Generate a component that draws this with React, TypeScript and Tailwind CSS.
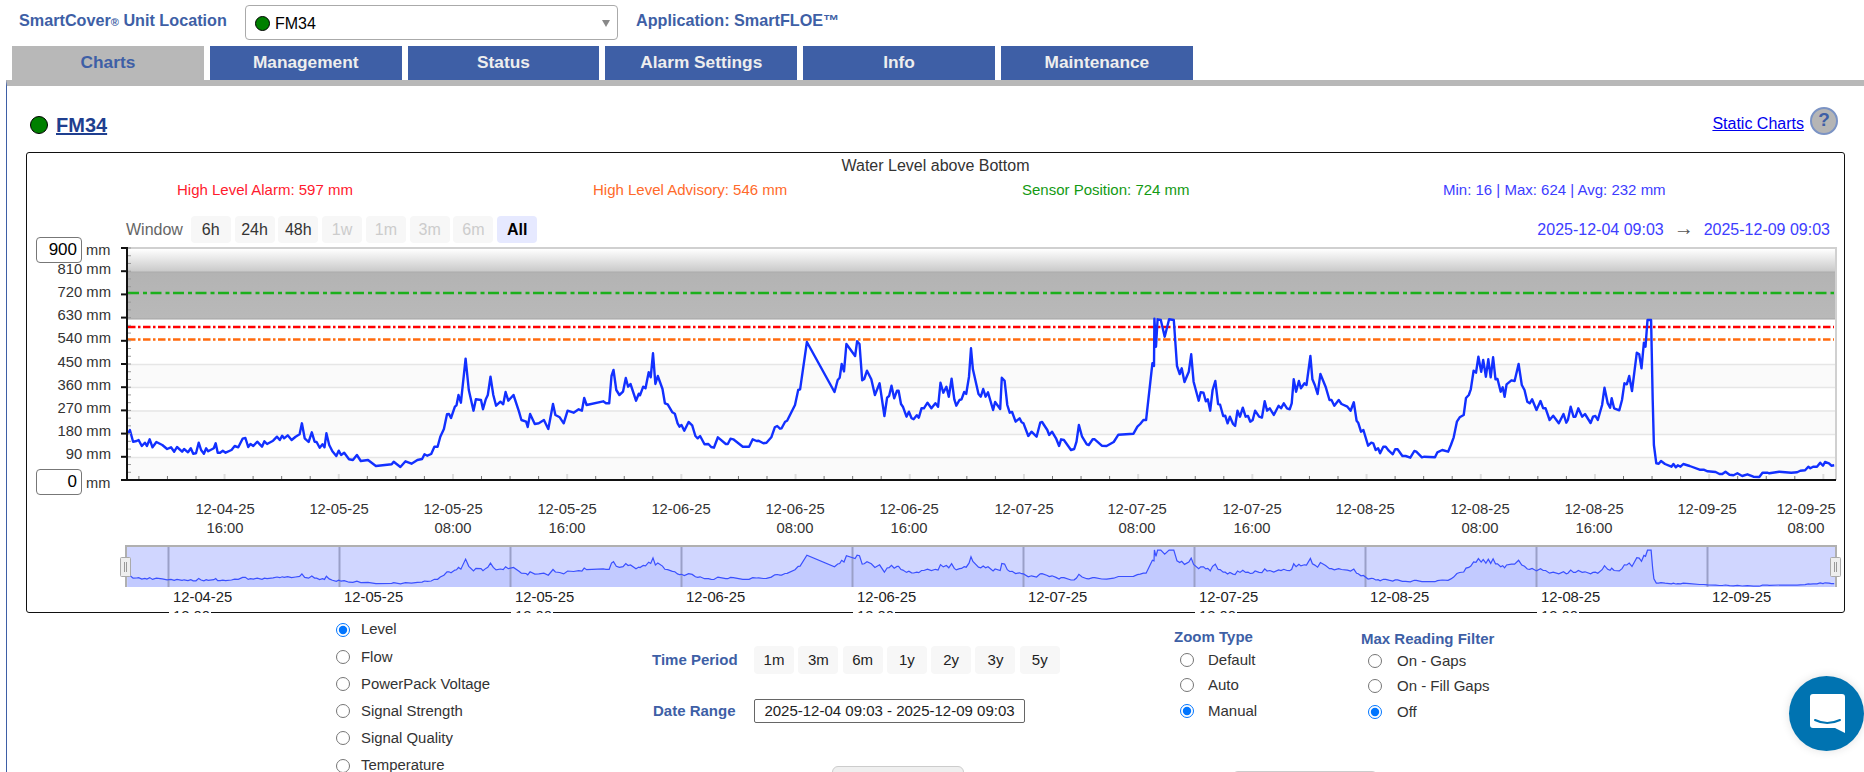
const rawA = "272,582 278,570 286,605 295,603 300,600 308,618 316,608 321,618 328,598 335,622 345,606 360,615 372,627 382,622 390,635 397,621 410,635 415,627 425,637 432,625 438,641 445,640 452,608 458,630 465,641 471,625 476,634 490,625 495,610 500,638 506,638 513,632 520,638 535,630 543,618 552,622 563,596 570,594 577,621 583,612 590,618 600,605 612,620 618,604 625,612 640,602 650,590 657,600 663,587 668,595 677,586 687,600 697,590 707,583 713,550 720,595 730,606 738,577 745,605 750,606 758,623 765,613 770,622 775,580 782,615 790,634 800,648 806,632 812,645 820,638 832,658 842,660 852,645 862,663 880,660 900,678 940,673 945,665 962,681 975,664 990,671 1005,660 1017,657 1023,643 1030,647 1040,642 1048,620 1056,620 1063,590 1072,567 1080,523 1085,522 1090,534 1100,500 1104,496 1109,465 1115,488 1127,356 1135,450 1147,512 1153,478 1166,480 1171,508 1178,478 1183,465 1190,410 1197,465 1204,497 1215,485 1222,493 1228,456 1235,482 1248,465 1262,515 1268,540 1280,545 1284,561 1290,522 1302,552 1312,550 1325,540 1336,567 1348,492 1354,525 1365,532 1375,550 1385,512 1400,518 1413,508 1421,512 1427,474 1433,495 1475,484 1482,490 1490,490 1496,408 1501,390 1508,450 1516,465 1525,455 1532,414 1538,440 1544,432 1558,482 1565,461";
const rawB = "0,466 8,440 14,445 22,397 27,412 33,340 39,432 45,408 57,447 63,490 70,493 82,517 88,521 95,550 100,560 105,555 112,572 123,546 132,556 140,588 146,595 152,588 163,613 173,612 180,621 187,623 197,592 217,612 222,612 229,596 236,598 260,620 276,620 285,598 295,603 300,602 312,610 320,608 332,592 341,562 347,558 354,566 358,565 367,545 372,542 392,495 400,450 405,448 422,306 492,456 500,420 505,413 510,372 516,394 522,312 544,348 549,304 555,312 562,421 567,417 574,392 585,418 594,465 606,430 618,528 625,473 630,468 636,437 643,475 650,452 654,452 660,492 665,500 674,530 680,515 687,535 692,538 700,526 705,533 712,505 718,505 727,488 737,505 747,490 754,500 760,428 767,458 775,440 781,470 788,416 795,478 800,497 808,480 813,478 820,456 825,462 832,410 837,325 842,388 856,462 862,470 868,447 874,470 880,457 893,510 898,486 911,507 915,413 922,422 929,495 935,518 941,516 950,545 960,535 965,547 970,550 982,588 990,575 1003,590 1012,548 1017,546 1030,570 1035,585 1042,575 1052,595 1060,618 1065,598 1072,600 1090,630 1098,627 1104,605 1110,555 1118,590 1130,613 1135,615 1145,598 1150,598 1168,617 1180,618 1198,606 1210,584 1248,581 1258,560 1265,552 1273,540 1280,540 1296,370 1300,378 1301,236 1305,320 1309,238 1317,240 1327,290 1338,238 1350,240 1358,378 1365,402 1370,385 1377,426 1388,395 1394,343 1400,425 1413,482 1418,457 1425,458 1431,484 1436,478 1442,512 1448,450 1455,423 1462,492 1467,494 1475,528 1480,527 1486,550 1492,530 1500,552 1505,558 1511,512";
const rawC = "0,530 7,503 14,530 20,528 26,545 32,540 38,512 48,530 55,533 62,484 68,512 75,505 85,525 97,497 103,505 110,490 118,505 125,508 130,490 135,418 141,455 148,423 153,445 162,430 167,435 177,348 182,418 188,435 195,462 202,402 215,440 225,480 230,480 237,497 248,480 255,492 270,500 278,512 286,487 293,542 297,548 304,575 310,570 322,617 330,608 335,610 341,630 347,625 352,640 360,620 366,620 374,632 384,643 390,628 396,628 408,648 416,648 428,653 438,633 443,635 457,652 463,650 490,652 496,637 508,630 523,635 530,615 537,592 545,545 552,532 562,525 568,474 575,465 580,448 587,392 593,398 599,350 606,395 611,360 618,410 624,358 630,412 636,352 642,418 647,417 655,455 660,442 665,470 670,433 682,421 690,423 700,372 708,435 715,450 722,485 728,490 734,478 745,510 755,483 762,505 768,505 778,540 787,527 801,550 813,522 820,548 824,540 831,500 838,530 843,530 850,505 860,530 867,522 881,549 887,530 893,528 899,540 910,495 916,443 924,490 930,503 934,475 940,505 953,511 960,480 966,430 972,433 978,408 985,453 997,338 1003,343 1009,385 1015,308 1019,320 1024,240 1033,240 1037,480 1040,615 1046,670 1052,671 1058,663 1068,672 1084,680 1089,672 1095,682 1100,676 1107,680 1114,672 1130,678 1155,689 1165,689 1175,694 1195,696 1205,702 1212,702 1220,695 1230,704 1240,706 1250,700 1262,708 1275,703 1290,710 1305,711 1313,698 1325,698 1330,700 1355,695 1385,698 1400,697 1408,692 1420,691 1428,680 1433,685 1440,680 1450,680 1458,668 1465,677 1470,666 1480,670 1486,677 1493,676";

// traced trace, in crop coordinates -> page coordinates
const trace = (raw: string, x0: number, k: number) =>
  raw.split(" ").map((p) => {
    const [x, y] = p.split(",").map(Number);
    return [x0 + x * k, 240 + y / 3] as [number, number];
  });

const points = [
  ...trace(rawA, 20, 620 / 1568),
  ...trace(rawB, 640, 620 / 1568),
  ...trace(rawC, 1240, 624 / 1568),
];

const mainLine = points.map(([x, y]) => `${x.toFixed(1)},${y.toFixed(1)}`).join(" ");
const miniPts = points.map(([x, y]) => [x, 550 + ((y - 319) * 36) / 157]);
const miniLine = miniPts.map(([x, y]) => `${x.toFixed(1)},${y.toFixed(1)}`).join(" ");
const miniArea = `${miniPts[0][0].toFixed(1)},587 ${miniLine} ${miniPts[miniPts.length - 1][0].toFixed(1)},587`;

const tabs = ["Charts", "Management", "Status", "Alarm Settings", "Info", "Maintenance"];
const windows = [
  { label: "6h", state: "on" },
  { label: "24h", state: "on" },
  { label: "48h", state: "on" },
  { label: "1w", state: "off" },
  { label: "1m", state: "off" },
  { label: "3m", state: "off" },
  { label: "6m", state: "off" },
  { label: "All", state: "active" },
];
const yValues = [810, 720, 630, 540, 450, 360, 270, 180, 90];
const xLabels: [number, string, string?][] = [
  [225, "12-04-25", "16:00"],
  [339, "12-05-25"],
  [453, "12-05-25", "08:00"],
  [567, "12-05-25", "16:00"],
  [681, "12-06-25"],
  [795, "12-06-25", "08:00"],
  [909, "12-06-25", "16:00"],
  [1024, "12-07-25"],
  [1137, "12-07-25", "08:00"],
  [1252, "12-07-25", "16:00"],
  [1365, "12-08-25"],
  [1480, "12-08-25", "08:00"],
  [1594, "12-08-25", "16:00"],
  [1707, "12-09-25"],
  [1806, "12-09-25", "08:00"],
];
const miniDates = ["12-04-25", "12-05-25", "12-05-25", "12-06-25", "12-06-25", "12-07-25", "12-07-25", "12-08-25", "12-08-25", "12-09-25"];
const xTicks = Array.from({ length: 60 }, (_, i) => i).filter((i) => 138.9 + i * 28.55 < 1836);
const yMinor = Array.from({ length: 31 }, (_, i) => i);

function Dot({ className }: { className: string }) {
  return <span className={`inline-block shrink-0 rounded-full border border-black bg-[#008000] ${className}`} />;
}

function Radio({ name, label, checked, gap }: { name: string; label: string; checked?: boolean; gap: string }) {
  return (
    <label className={`flex items-center ${gap}`}>
      <input type="radio" name={name} defaultChecked={checked} className="h-[14px] w-[14px]" />
      <span>{label}</span>
    </label>
  );
}

function Plot() {
  return (
    <svg width={1817} height={372} viewBox="27 241 1817 372" className="relative -mb-px -mt-[3px] block" fontFamily="'Liberation Sans', Arial, sans-serif">
      <defs>
        <linearGradient id="fade" x1="0" y1="0" x2="0" y2="1">
          <stop offset="0" stopColor="#ffffff" />
          <stop offset="0.2" stopColor="#f4f4f4" />
          <stop offset="1" stopColor="#c8c8c8" />
        </linearGradient>
        <linearGradient id="band" x1="0" y1="0" x2="0" y2="1">
          <stop offset="0" stopColor="#b3b3b3" />
          <stop offset="1" stopColor="#b9b9b9" />
        </linearGradient>
      </defs>

      {/* plot background */}
      <rect x={128} y={249} width={1708} height={23} fill="url(#fade)" />
      <rect x={128} y={272} width={1708} height={47} fill="url(#band)" />
      <line x1={128} x2={1836} y1={272} y2={272} stroke="#acacac" />
      <line x1={128} x2={1836} y1={319} y2={319} stroke="#a4a4a4" />
      <rect x={128} y={364} width={1708} height={23} fill="#fafafa" />
      <rect x={128} y={410} width={1708} height={24} fill="#fafafa" />
      <rect x={128} y={457} width={1708} height={23} fill="#fafafa" />
      {[364.5, 387.5, 411, 434.5, 457.5].map((y) => (
        <line key={y} x1={128} x2={1836} y1={y} y2={y} stroke="#e6e6e6" strokeWidth={1.5} />
      ))}
      <line x1={127} x2={1837} y1={248} y2={248} stroke="#d0d0d0" strokeWidth={2} />
      <line x1={1836} x2={1836} y1={248} y2={480} stroke="#d0d0d0" strokeWidth={2} />

      {/* threshold lines */}
      <line x1={128} x2={1834} y1={293} y2={293} stroke="#1cb01c" strokeWidth={2.6} strokeDasharray="11 4 4 3.5" />
      <line x1={128} x2={1834} y1={327} y2={327} stroke="#ff0000" strokeWidth={2.6} strokeDasharray="7.5 2.5 2.5 2.5" />
      <line x1={128} x2={1834} y1={339.5} y2={339.5} stroke="#ff6a0d" strokeWidth={2.6} strokeDasharray="7.5 2.5 2.5 2.5" />

      <polyline points={mainLine} fill="none" stroke="#1230ff" strokeWidth={2.4} strokeLinejoin="round" />

      {/* axes */}
      {yMinor.map((i) => (
        <line key={i} x1={128} x2={131} y1={480 - i * 7.733} y2={480 - i * 7.733} stroke="#999" />
      ))}
      {xTicks.map((i) => (
        <line key={i} x1={138.9 + i * 28.55} x2={138.9 + i * 28.55} y1={i % 4 === 3 ? 474 : 476} y2={480} stroke={i % 4 === 3 ? "#dddddd" : "#777"} strokeWidth={i % 4 === 3 ? 2 : 1} />
      ))}
      <line x1={127} x2={127} y1={247} y2={481} stroke="#111" strokeWidth={2} />
      <line x1={126} x2={1836} y1={480} y2={480} stroke="#111" strokeWidth={2} />
      {[248, 271.2, 294.4, 317.6, 340.8, 364, 387.2, 410.4, 433.6, 456.8, 480].map((y) => (
        <line key={y} x1={121} x2={127} y1={y} y2={y} stroke="#111" strokeWidth={2} />
      ))}
      {yValues.map((v, i) => (
        <text key={v} x={111} y={271.2 + i * 23.2 + 2.6} textAnchor="end" fontSize={14.8} fill="#333">
          {v} mm
        </text>
      ))}
      <text x={86} y={255} fontSize={14.6} fill="#333">mm</text>
      <text x={86} y={488} fontSize={14.6} fill="#333">mm</text>

      {xLabels.map(([x, date, time]) => (
        <text key={x} x={x} textAnchor="middle" fontSize={14.8} fill="#333">
          <tspan x={x} y={514}>{date}</tspan>
          {time && <tspan x={x} y={533}>{time}</tspan>}
        </text>
      ))}

      {/* range selector */}
      <rect x={125} y={546} width={1712} height={41} fill="#d0d6ff" />
      <polygon points={miniArea} fill="#c2caff" />
      {miniDates.map((_, i) => (
        <line key={i} x1={168.5 + i * 171} x2={168.5 + i * 171} y1={547} y2={587} stroke="#9aa0c8" strokeWidth={2} />
      ))}
      <polyline points={miniLine} fill="none" stroke="#3a50ff" strokeWidth={1.2} />
      <path d="M126 587V546H1836V587" fill="none" stroke="#b0b0b0" strokeWidth={2} />
      {[120, 1830].map((x) => (
        <g key={x}>
          <rect x={x + 0.5} y={557.5} width={10} height={19} rx={1} fill="#eeeeee" stroke="#aaaaaa" />
          <path d={`M${x + 4.5} 562V572M${x + 6.5} 562V572`} stroke="#999" />
        </g>
      ))}
      {miniDates.map((d, i) => (
        <g key={i}>
          {i % 2 === 0 && <rect x={169 + i * 171} y={609} width={42} height={4} fill="#fff" />}
          <text x={173 + i * 171} y={602} fontSize={14.8} fill="#222">{d}</text>
          {i % 2 === 0 && <text x={173 + i * 171} y={621} fontSize={14.8} fill="#222">12:00</text>}
        </g>
      ))}
    </svg>
  );
}

export default function App() {
  return (
    <div className="relative h-[772px] w-[1864px] overflow-hidden bg-white font-['Liberation_Sans',Arial,sans-serif] text-[15px] text-[#333]">
      {/* Unit picker */}
      <div className="flex h-[46px] items-start pl-[19px] pt-[5px] text-[16.2px] font-bold text-[#3e5fa6]">
        <span className="mt-[3px] w-[226px]">
          SmartCover<span className="text-[11px]">®</span> Unit Location
        </span>
        <div className="flex h-[35px] w-[373px] items-center rounded border border-[#aaa] pl-[9px] pr-[7px] text-[16px] font-normal text-black">
          <Dot className="mr-[5px] mt-[2px] h-[15px] w-[15px]" />
          <span className="mt-[2px]">FM34</span>
          <span className="ml-auto mt-[2px] h-0 w-0 border-x-[4.5px] border-t-[7px] border-x-transparent border-t-[#888]" />
        </div>
        <span className="ml-[18px] mt-[3px]">Application: SmartFLOE™</span>
      </div>

      {/* Tabs */}
      <div className="flex h-[34px] gap-[6px] pl-[12px]">
        {tabs.map((t, i) => (
          <div
            key={t}
            className={`flex w-[191.8px] items-center justify-center text-[17.3px] font-bold ${
              i === 0 ? "bg-[#b8b8b8] text-[#3e5fa6]" : "bg-[#3e5fa6] text-[#eeeeee]"
            }`}
          >
            {t}
          </div>
        ))}
      </div>

      <div className="ml-[6px] h-[692px] border-l border-t-[6px] border-l-[#3e5fa6] border-t-[#b8b8b8] pl-[19px]">
        {/* Heading */}
        <div className="flex h-[66px] items-start justify-between pr-[26px]">
          <div className="ml-[5px] mt-[29px] flex items-center gap-[8px]">
            <Dot className="-ml-[1px] h-[18px] w-[18px]" />
            <a className="text-[20px] font-bold leading-[20px] text-[#1f3f8f] underline">FM34</a>
          </div>
          <div className="mt-[19px] flex items-center gap-[6px]">
            <a className="mt-[7px] text-[16px] text-[#0000ee] underline">Static Charts</a>
            <span className="flex h-[28px] w-[28px] items-center justify-center rounded-full border-2 border-[#7b93c4] bg-[#b5b5b5] text-[19px] font-bold text-[#3e5fa6]">
              ?
            </span>
          </div>
        </div>

        {/* Chart card */}
        <div className="relative h-[461px] w-[1819px] rounded-[3px] border border-[#111]">
          <div className="h-[25px] pt-[3px] text-center text-[16px] leading-[20px] text-[#333]">Water Level above Bottom</div>
          <div className="flex h-[24px] items-center">
            <span className="ml-[150px] w-[416px] text-[#ff1a2e]">High Level Alarm: 597 mm</span>
            <span className="w-[429px] text-[#ff6a2a]">High Level Advisory: 546 mm</span>
            <span className="w-[421px] text-[#139a13]">Sensor Position: 724 mm</span>
            <span className="text-[#3d3dff]">Min: 16 | Max: 624 | Avg: 232 mm</span>
          </div>
          <div className="mt-[14px] flex h-[27px] items-center justify-between pl-[99px] pr-[14px] text-[16px]">
            <div className="flex items-center gap-[3.8px]">
              <span className="mr-[4px] text-[#666]">Window</span>
              {windows.map((w) => (
                <span
                  key={w.label}
                  className={`flex h-[27px] w-[40px] items-center justify-center rounded-sm ${
                    w.state === "active"
                      ? "bg-[#e6e9ff] font-bold text-black"
                      : w.state === "off"
                        ? "bg-[#f7f7f7] text-[#cccccc]"
                        : "bg-[#f7f7f7] text-[#333]"
                  }`}
                >
                  {w.label}
                </span>
              ))}
            </div>
            <div className="flex items-center text-[#3d3dff]">
              <span>2025-12-04 09:03</span>
              <span className="mx-[10px] -mt-[4px] text-[20px] leading-[20px] text-[#555]">→</span>
              <span>2025-12-09 09:03</span>
            </div>
          </div>
          <div className="mt-px">
            <Plot />
          </div>
          {/* axis range inputs sit over the plot */}
          <div className="absolute left-[9px] top-[84px] flex h-[26px] w-[46px] items-center justify-end rounded-sm border border-[#777] bg-white pr-[4px] text-[17px] text-black">900</div>
          <div className="absolute left-[9px] top-[316px] flex h-[26px] w-[46px] items-center justify-end rounded-sm border border-[#777] bg-white pr-[4px] text-[17px] text-black">0</div>
        </div>

        {/* Controls */}
        <div className="flex">
          <div className="ml-[310px] w-[316px] pt-[3px] text-[14.9px]">
            {["Level", "Flow", "PowerPack Voltage", "Signal Strength", "Signal Quality", "Temperature"].map((r, i) => (
              <div key={r} className="flex h-[27.2px] items-center">
                <Radio name="series" label={r} checked={i === 0} gap="gap-[11px]" />
              </div>
            ))}
          </div>
          <div className="w-[522px] pt-[33px]">
            <div className="flex h-[28px] items-center">
              <span className="w-[102px] font-bold text-[#3e5fa6]">Time Period</span>
              <div className="flex gap-[4.3px]">
                {["1m", "3m", "6m", "1y", "2y", "3y", "5y"].map((p) => (
                  <span key={p} className="flex h-[28px] w-[40px] items-center justify-center rounded-sm bg-[#f7f7f7] text-[#222]">
                    {p}
                  </span>
                ))}
              </div>
            </div>
            <div className="mt-[25px] flex h-[24px] items-center">
              <span className="ml-px w-[101px] font-bold text-[#3e5fa6]">Date Range</span>
              <div className="flex h-[24px] w-[271px] items-center justify-center rounded-[2px] border border-[#666] text-[15px] text-[#222]">
                2025-12-04 09:03 - 2025-12-09 09:03
              </div>
            </div>
            <div className="ml-[180px] mt-[43px] h-[20px] w-[132px] rounded-t-md border border-[#ccc] bg-[#efefef]" />
          </div>
          <div className="w-[187px] pt-[13px]">
            <div className="h-[20px] font-bold text-[#3e5fa6]">Zoom Type</div>
            <div className="ml-[6px] mt-px">
              {["Default", "Auto", "Manual"].map((r, i) => (
                <div key={r} className="flex h-[25.5px] items-center">
                  <Radio name="zoom" label={r} checked={i === 2} gap="gap-[14px]" />
                </div>
              ))}
            </div>
            <div className="ml-[58px] mt-[47.5px] h-[10px] w-[146px] rounded-t-md border border-[#ccc] bg-white" />
          </div>
          <div className="pt-[15px]">
            <div className="h-[20px] font-bold text-[#3e5fa6]">Max Reading Filter</div>
            <div className="ml-[7px]">
              {["On - Gaps", "On - Fill Gaps", "Off"].map((r, i) => (
                <div key={r} className="flex h-[25.5px] items-center">
                  <Radio name="filter" label={r} checked={i === 2} gap="gap-[15px]" />
                </div>
              ))}
            </div>
          </div>
        </div>
      </div>

      {/* Chat launcher */}
      <div className="absolute left-[1789px] top-[676px] flex h-[75px] w-[75px] items-center justify-center rounded-full bg-[#0073b1] shadow-[0_0_10px_rgba(0,0,0,0.12)]">
        <svg width={38} height={42} viewBox="0 0 38 42" className="ml-[2px]">
          <path d="M4 1H33a3 3 0 0 1 3 3V40L26 35H4a3 3 0 0 1-3-3V4a3 3 0 0 1 3-3Z" fill="#fff" />
          <path d="M6 27Q18 33 31 27" fill="none" stroke="#0073b1" strokeWidth={2} strokeLinecap="round" />
        </svg>
      </div>
    </div>
  );
}
